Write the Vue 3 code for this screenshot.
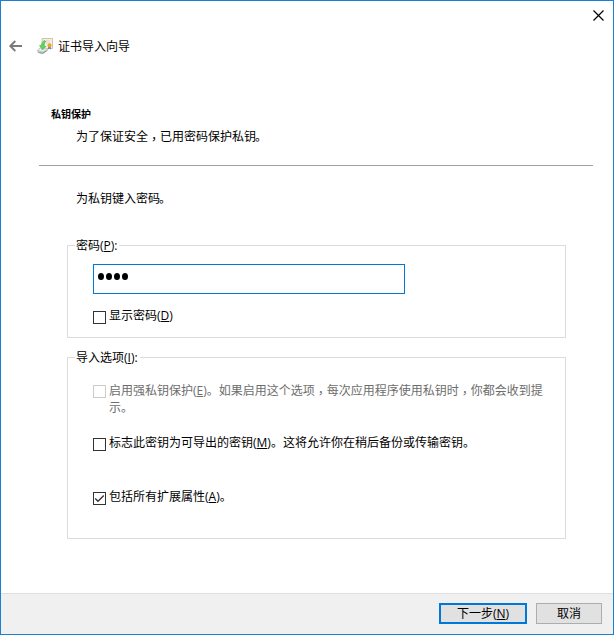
<script setup>
import { ref } from 'vue'

const password = ref('1234')
const options = ref([
  { id: 'strong', before: '启用强私钥保护(', key: 'E', after: ')。如果启用这个选项，每次应用程序使用私钥时，你都会收到提示。', checked: false, disabled: true },
  { id: 'export', before: '标志此密钥为可导出的密钥(', key: 'M', after: ')。这将允许你在稍后备份或传输密钥。', checked: false, disabled: false },
  { id: 'extended', before: '包括所有扩展属性(', key: 'A', after: ')。', checked: true, disabled: false },
])
const pieces = (text) => text.split(/(，)/)
</script>

<template>
  <div class="window">
    <div class="titlebar">
      <button class="close" aria-label="关闭">
        <svg width="11" height="11" viewBox="0 0 11 11"><path d="M.5.5l10 10M10.500.5l-10 10" stroke="#000" stroke-width="1.2" fill="none" /></svg>
      </button>
    </div>
    <header class="head">
      <svg class="back" width="14" height="12" viewBox="0 0 14 12"><path d="M14 6H2.500M7.300 1l-5 5 5 5" fill="none" stroke="#7b7b7b" stroke-width="1.900" /></svg>
      <svg class="logo" width="16" height="16" viewBox="0 0 16 16">
        <path d="M5 .5h10.500v10H5z" fill="#f4eee4" stroke="#cfc3b2" />
        <path d="M7 3h6M9 5h4" stroke="#ddd5c8" />
        <path d="M0 12l4-3 7 1.500v2L6 16l-5.500-1.500z" fill="#c3c7c7" />
        <path d="M1 12l3.500-2 5.500 1-4.500 2.500z" fill="#eceeee" />
        <path d="M1.500 14.500l4 .8 4-2.300" stroke="#8f9696" fill="none" />
        <path d="M7.500 2.500C5.500 3.500 4.800 5 4.700 7L2.500 7.500l3 4.500L9 8.500 7.300 8c-.2-2 .2-3.300 1.500-4.500z" fill="#5fd35b" stroke="#37b23d" stroke-width=".5" />
        <path d="M11.500 8l-.6 3.500 1.600-1 1.500 1-.5-3.500z" fill="#4c83c6" />
        <circle cx="12.500" cy="7.200" r="2" fill="#f3a51c" />
      </svg>
      <h1>证书导入向导</h1>
    </header>

    <main>
      <section class="intro">
        <h2>私钥保护</h2>
        <p>为了保证安全<span class="comma">，</span>已用密码保护私钥<span class="stop">。</span></p>
      </section>
      <p class="prompt">为私钥键入密码<span class="stop">。</span></p>

      <fieldset class="group password">
        <legend>密码(<u>P</u>):</legend>
        <div class="field" role="textbox" aria-label="密码">
          <i v-for="(c, i) in password" :key="i" class="dot"></i>
        </div>
        <label class="check">
          <span class="box"></span><span class="label">显示密码(<u>D</u>)</span>
        </label>
      </fieldset>

      <fieldset class="group options">
        <legend>导入选项(<u>I</u>):</legend>
        <label v-for="o in options" :key="o.id" class="check" :class="[o.id, { disabled: o.disabled }]">
          <span class="box">
            <svg v-if="o.checked" width="11" height="11" viewBox="0 0 11 11"><path d="M1.200 5.500L4 8.300 9.800 2.500" fill="none" stroke="#333" stroke-width="1.300" /></svg>
          </span>
          <span class="label">{{ o.before }}<u>{{ o.key }}</u><template v-for="(p, i) in pieces(o.after)" :key="i"><span v-if="p === '，'" class="comma">{{ p }}</span><template v-else>{{ p }}</template></template></span>
        </label>
      </fieldset>
    </main>

    <footer>
      <button class="btn primary">下一步(<u>N</u>)</button>
      <button class="btn">取消</button>
    </footer>
  </div>
</template>

<style>
body { margin: 0; background: #fff; }
</style>

<style scoped>
* { box-sizing: border-box; }
.window {
  width: 614px;
  height: 635px;
  border: 1px solid #1a80d4;
  background: #fff;
  color: #000;
  display: flex;
  flex-direction: column;
  font: 12px/16px "Open Sans", "Noto Sans CJK SC", sans-serif;
}
h1, h2, p { margin: 0; font-size: 12px; font-weight: 400; }
u { text-decoration: underline; text-underline-offset: 1px; text-decoration-thickness: 1px; }
.comma { font-family: "Noto Sans CJK TC", sans-serif; line-height: 0; vertical-align: -3px; }
.stop { margin-left: -1px; }
.titlebar { height: 29px; display: flex; justify-content: flex-end; padding: 9px 9px 0 0; }
.close { width: 11px; height: 11px; padding: 0; border: 0; background: none; display: block; }
.close svg { display: block; }
.head { height: 32px; display: flex; align-items: center; padding-left: 7px; }
.logo { margin-left: 15px; }
.head h1 { margin-left: 5px; padding-top: 2px; }
main { flex: 1; padding: 44px 20px 0 38px; }
.intro { height: 60px; border-bottom: 1px solid #a0a0a0; padding-left: 12px; }
.intro h2 { font-size: 10px; font-weight: 700; line-height: 16px; }
.intro p { margin: 7px 0 0 25px; }
.prompt { padding: 25px 0 0 37px; }
.group {
  width: 499px;
  min-width: 0;
  margin: 0 0 0 28px;
  border: 1px solid #dcdcdc;
  padding: 0 20px 0 25px;
}
legend { margin-left: -18px; padding: 0 2px 0 1px; height: 14px; }
.password { height: 100px; margin-top: 31px; }
.options { height: 189px; margin-top: 12px; }
.field {
  width: 312px;
  height: 30px;
  margin-top: 12px;
  border: 1px solid #0078d7;
  display: flex;
  gap: 2px;
  padding: 8px 0 0 4px;
}
.dot { width: 6px; height: 7px; border-radius: 50%; background: #000; }
.check { display: flex; gap: 3px; }
.box { flex: none; width: 13px; height: 13px; border: 1px solid #333; margin-top: 3px; }
.box svg { display: block; }
.password .check { margin-top: 14px; }
.strong { margin-top: 18px; line-height: 17px; }
.export { margin-top: 19px; }
.extended { margin-top: 38px; }
.disabled { color: #6d6d6d; }
.disabled .box { border-color: #ccc; }
footer {
  height: 41px;
  border-top: 1px solid #dfdfdf;
  background: #f0f0f0;
  display: flex;
  justify-content: flex-end;
  gap: 9px;
  padding: 9px 11px 0 0;
}
.btn {
  width: 66px;
  height: 21px;
  padding: 0;
  border: 1px solid #adadad;
  background: #e1e1e1;
  color: #000;
  font: inherit;
  display: flex;
  align-items: center;
  justify-content: center;
}
.primary { width: 88px; border: 2px solid #0078d7; }
.primary u { white-space: pre; }
</style>
